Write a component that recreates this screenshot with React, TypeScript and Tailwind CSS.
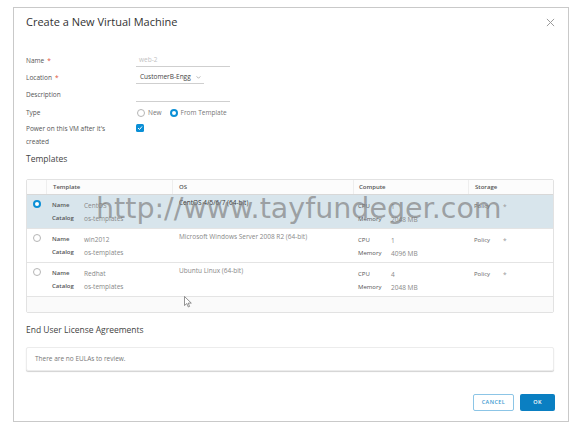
import React from 'react'

const templates = [
  { name: 'CentOS', os: 'CentOS 4/5/6/7 (64-bit)', cpu: '1', memory: '2048 MB', selected: true },
  { name: 'win2012', os: 'Microsoft Windows Server 2008 R2 (64-bit)', cpu: '1', memory: '4096 MB', selected: false },
  { name: 'Redhat', os: 'Ubuntu Linux (64-bit)', cpu: '4', memory: '2048 MB', selected: false },
]

function Radio({ checked }: { checked: boolean }) {
  return checked ? (
    <span className="inline-block w-[8px] h-[8px] rounded-full border-[2.5px] border-[#0a8fd6] bg-white" />
  ) : (
    <span className="inline-block w-[8px] h-[8px] rounded-full border border-[#b5b5b5] bg-white" />
  )
}

export default function App() {
  return (
    <div
      className="relative w-[582px] h-[431px] bg-white pt-[7px] pl-[13px] overflow-hidden"
      style={{ fontFamily: '"Open Sans", "Liberation Sans", sans-serif' }}
    >
      <div className="w-[556px] h-[415px] border border-[#c9c9c9] px-[12px] pt-[6px] text-[#565656]">
        {/* Header */}
        <div className="flex items-center justify-between h-[17px]">
          <h1 className="text-[11px] text-[#333]">Create a New Virtual Machine</h1>
          <svg width="9" height="9" viewBox="0 0 10 10" className="mr-[1px]">
            <path d="M1 1 L9 9 M9 1 L1 9" stroke="#9a9a9a" strokeWidth="1.1" />
          </svg>
        </div>

        {/* Form */}
        <div className="mt-[21px] grid grid-cols-[110px_1fr] text-[6.5px] text-[#555]">
          <div className="h-[17px] flex items-center">
            Name <span className="text-[#e0523a] ml-[3px]">*</span>
          </div>
          <div className="h-[17px] flex items-center">
            <div className="w-[94px] h-[13px] border-b border-[#cfcfcf] pl-[3px] text-[#c2c2c2] flex items-center">web-2</div>
          </div>

          <div className="h-[17px] flex items-center">
            Location <span className="text-[#e0523a] ml-[3px]">*</span>
          </div>
          <div className="h-[17px] flex items-center">
            <div className="w-[68px] h-[13px] border-b border-[#cfcfcf] pl-[4px] text-[#444] flex items-center gap-[5px]">
              CustomerB-Engg
              <svg width="5" height="3" viewBox="0 0 6 4">
                <path d="M0.5 0.5 L3 3 L5.5 0.5" fill="none" stroke="#888" strokeWidth="0.8" />
              </svg>
            </div>
          </div>

          <div className="h-[18px] flex items-center">Description</div>
          <div className="h-[18px] flex items-center">
            <div className="w-[94px] h-[13px] border-b border-[#cfcfcf]" />
          </div>

          <div className="h-[17px] flex items-center">Type</div>
          <div className="h-[17px] flex items-center gap-[3px] pl-[1px]">
            <Radio checked={false} />
            <span className="text-[#777] mr-[5px]">New</span>
            <Radio checked />
            <span className="text-[#777]">From Template</span>
          </div>

          <div className="pt-[1px] leading-[13px]">
            Power on this VM after it's
            <br />
            created
          </div>
          <div className="pt-[3px]">
            <span className="flex items-center justify-center w-[8px] h-[8px] rounded-[1.5px] bg-[#0a8fd6]">
              <svg width="6" height="6" viewBox="0 0 6 6">
                <path d="M1 3 L2.5 4.5 L5 1.5" fill="none" stroke="white" strokeWidth="1" />
              </svg>
            </span>
          </div>
        </div>

        <h2 className="mt-[4px] text-[8.5px] text-[#444] leading-[14px]">Templates</h2>

        {/* Table */}
        <div className="mt-[13px] w-[528px] border border-[#e2e2e2] rounded-[2px] text-[6.5px]">
          <div className="flex h-[15px] bg-[#fcfcfc] border-b border-[#d8d8d8] text-[#555] font-semibold text-[6px]">
            <div className="w-[19px]" />
            <div className="w-[126px] border-l border-[#eee] pl-[6px] flex items-center">Template</div>
            <div className="w-[181px] border-l border-[#eee] pl-[6px] flex items-center">OS</div>
            <div className="w-[115px] border-l border-[#eee] pl-[5px] flex items-center">Compute</div>
            <div className="flex-1 border-l border-[#eee] pl-[6px] flex items-center">Storage</div>
          </div>
          {templates.map((t) => (
            <div
              key={t.name}
              className={`flex h-[34px] border-b border-[#e4e4e4] ${t.selected ? 'bg-[#d8e5ec]' : 'bg-white'}`}
            >
              <div className="w-[19px] pl-[6px] pt-[5px]">
                <Radio checked={t.selected} />
              </div>
              <div className="w-[126px] pl-[6px] pt-[4px] leading-[13px]">
                <div className="flex">
                  <span className="w-[32px] text-[#555] text-[6px] font-semibold">Name</span>
                  <span className="text-[#888]">{t.name}</span>
                </div>
                <div className="flex">
                  <span className="w-[32px] text-[#555] text-[6px] font-semibold">Catalog</span>
                  <span className="text-[#888]">os-templates</span>
                </div>
              </div>
              <div className={`w-[181px] pl-[7px] pt-[3px] ${t.selected ? 'text-[#333]' : 'text-[#888]'}`}>{t.os}</div>
              <div className="w-[115px] pl-[5px] pt-[5px] leading-[13px]">
                <div className="flex">
                  <span className="w-[33px] text-[#555] text-[6px]">CPU</span>
                  <span className="text-[#888]">{t.cpu}</span>
                </div>
                <div className="flex">
                  <span className="w-[33px] text-[#555] text-[6px] font-medium">Memory</span>
                  <span className="text-[#888]">{t.memory}</span>
                </div>
              </div>
              <div className="flex-1 pl-[6px] pt-[5px] leading-[13px] flex">
                <span className="w-[29px] text-[#666] text-[6px] font-medium">Policy</span>
                <span className="text-[#999]">*</span>
              </div>
            </div>
          ))}
          <div className="h-[15px] bg-[#fafafa]" />
        </div>

        <h2 className="mt-[10px] text-[8.5px] text-[#444] leading-[14px]">End User License Agreements</h2>

        <div className="mt-[10px] w-[528px] h-[24px] bg-white border border-[#ececec] shadow-[0_1px_1px_rgba(0,0,0,0.18)] rounded-[2px] pl-[8px] flex items-center text-[6.5px] text-[#777]">
          There are no EULAs to review.
        </div>

        {/* Footer */}
        <div className="mt-[23px] flex justify-end gap-[6px] pr-[1px]">
          <button className="w-[41px] h-[17px] border border-[#8cc5e6] rounded-[2px] text-[5.5px] font-semibold tracking-[0.08em] text-[#3d9ad1] bg-white">
            CANCEL
          </button>
          <button className="w-[35px] h-[17px] rounded-[2px] text-[5.5px] font-semibold tracking-[0.08em] text-white bg-[#0a7fc2]">
            OK
          </button>
        </div>
      </div>

      {/* Watermark */}
      <div
        className="absolute left-[96px] top-[195px] text-[28.5px] leading-none text-[rgba(125,125,125,0.68)] pointer-events-none whitespace-nowrap"
        style={{ fontFamily: '"DejaVu Sans", sans-serif' }}
      >
        http://www.tayfundeger.com
      </div>

      {/* Mouse cursor */}
      <svg className="absolute left-[184px] top-[296px]" width="8" height="12" viewBox="0 0 8 12">
        <path d="M0.5 0.5 L0.5 9.5 L2.8 7.5 L4.3 11 L5.6 10.4 L4.2 7.1 L7.3 7.1 Z" fill="white" stroke="#666" strokeWidth="0.7" />
      </svg>
    </div>
  )
}
